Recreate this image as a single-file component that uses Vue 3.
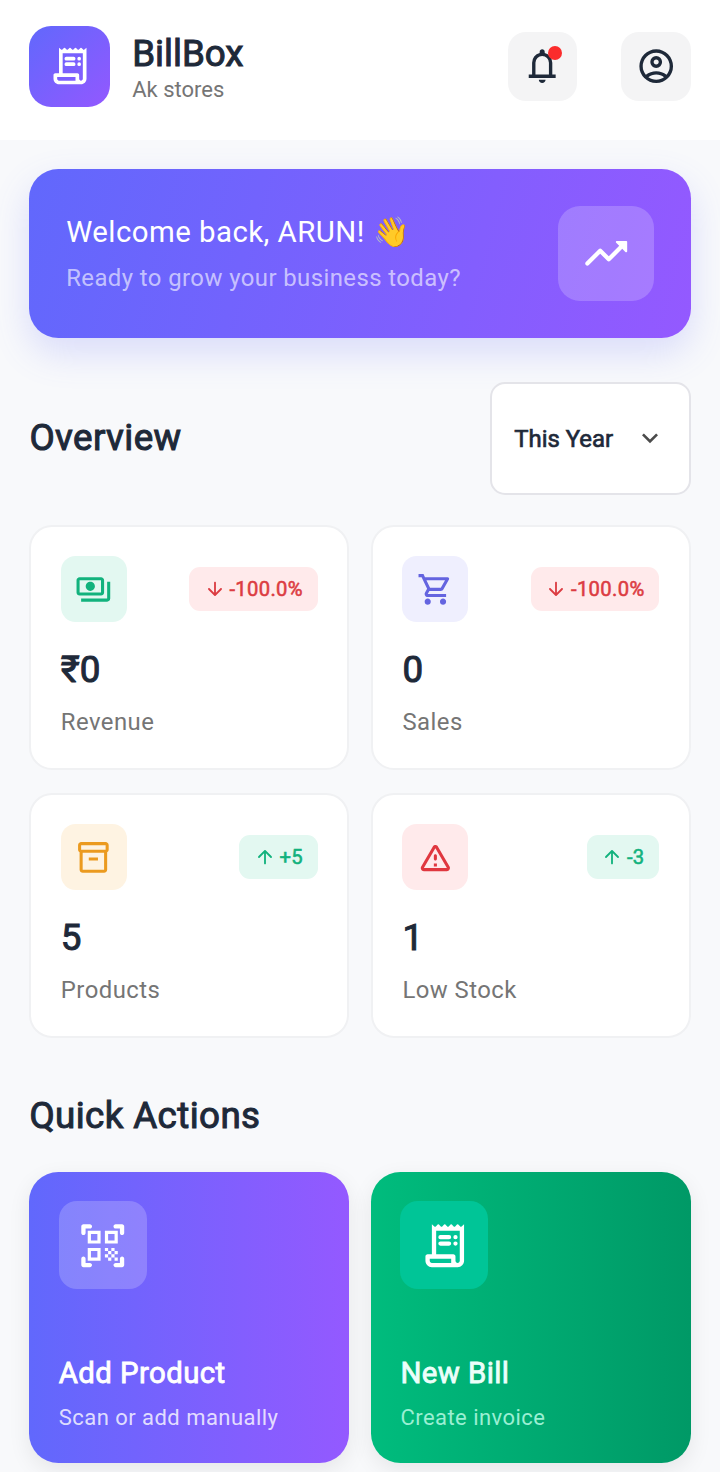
<script setup>
import {ref} from "vue";

const storeName = ref("Ak stores");
const userName = ref("ARUN");
const period = ref("This Year");

const icons = {
  receipt: "M19.5 3.3L18.3 2.15Q18 1.85 17.7 2.15L16.85 3Q16.5 3.35 16.15 3L15.3 2.15Q15 1.85 14.7 2.15L13.85 3Q13.5 3.35 13.15 3L12.3 2.15Q12 1.85 11.7 2.15L10.85 3Q10.5 3.35 10.15 3L9.3 2.15Q9 1.85 8.7 2.15L7.85 3Q7.5 3.35 7.15 3L6 2v14H4c-.55 0-1 .45-1 1v2c0 1.66 1.34 3 3 3h12c1.66 0 3-1.34 3-3V2l-1.15 1Q19.7 3.2 19.5 3.3zM15 20H6c-.55 0-1-.45-1-1v-1h10v2zm4-1c0 .55-.45 1-1 1s-1-.45-1-1v-2c0-.55-.45-1-1-1H8V5h11v14z M10 7h4a1 1 0 0 1 0 2h-4a1 1 0 0 1 0-2z M17 7a1 1 0 1 1 0 2a1 1 0 0 1 0-2z M10 10h4a1 1 0 0 1 0 2h-4a1 1 0 0 1 0-2z M17 10a1 1 0 1 1 0 2a1 1 0 0 1 0-2z",
  bell: "M4 19v-2h2v-7q0-2.075 1.25-3.687T10.5 4.2v-.7q0-.625.438-1.062T12 2t1.063.438T13.5 3.5v.7q2 .5 3.25 2.113T18 10v7h2v2zm8 3q-.825 0-1.412-.587T10 20h4q0 .825-.587 1.413T12 22M8 17h8v-7q0-1.65-1.175-2.825T12 6T9.175 7.175T8 10z",
  account: "M5.85 17.1q1.275-.975 2.85-1.537T12 15t3.3.563t2.85 1.537q.875-1.025 1.363-2.325T20 12q0-3.325-2.337-5.663T12 4T6.337 6.338T4 12q0 1.475.488 2.775T5.85 17.1m6.15-4.1q-1.475 0-2.488-1.012T8.5 9.5t1.013-2.488T12 6t2.488 1.013T15.5 9.5t-1.012 2.488T12 13m0 9q-2.075 0-3.9-.788t-3.175-2.137T2.788 15.9T2 12t.788-3.9t2.137-3.175T8.1 2.788T12 2t3.9.788t3.175 2.137T21.213 8.1T22 12t-.788 3.9t-2.137 3.175t-3.175 2.138T12 22m0-2q1.325 0 2.5-.387t2.15-1.113q-.975-.725-2.15-1.112T12 17t-2.5.388T7.35 18.5q.975.725 2.15 1.113T12 20m0-9q.65 0 1.075-.425T13.5 9.5t-.425-1.075T12 8t-1.075.425T10.5 9.5t.425 1.075T12 11",
  trending: "M16.85 6.85l1.44 1.44-4.88 4.88-3.29-3.29c-.39-.39-1.02-.39-1.41 0l-6 6.01c-.39.39-.39 1.02 0 1.41.39.39 1.02.39 1.41 0L9.41 12l3.29 3.29c.39.39 1.02.39 1.41 0l5.59-5.58 1.44 1.44c.31.31.85.09.85-.35V6.5c.01-.28-.21-.5-.49-.5h-4.29c-.45 0-.67.54-.36.85z",
  chevron: "M7.41 8.59L12 13.17l4.59-4.58L18 10l-6 6-6-6z",
  payments: "M19 14V6c0-1.1-.9-2-2-2H3c-1.1 0-2 .9-2 2v8c0 1.1.9 2 2 2h14c1.1 0 2-.9 2-2zm-2 0H3V6h14v8zm-7-7c-1.66 0-3 1.34-3 3s1.34 3 3 3 3-1.34 3-3-1.34-3-3-3zm13 0v11c0 1.1-.9 2-2 2H4v-2h17V7h2z",
  cart: "M15.55 13c.75 0 1.41-.41 1.75-1.03l3.58-6.49c.37-.66-.11-1.48-.87-1.48H5.21l-.94-2H1v2h2l3.6 7.59-1.35 2.44C4.52 15.37 5.48 17 7 17h12v-2H7l1.1-2h7.45zM6.16 6h12.15l-2.76 5H8.53L6.16 6zM7 18c-1.1 0-1.99.9-1.99 2S5.9 22 7 22s2-.9 2-2-.9-2-2-2zm10 0c-1.1 0-1.99.9-1.99 2s.89 2 1.99 2 2-.9 2-2-.9-2-2-2z",
  box: "M20 2H4c-1 0-2 .9-2 2v3.01c0 .72.43 1.34 1 1.69V20c0 1.1 1.1 2 2 2h14c.9 0 2-.9 2-2V8.7c.57-.35 1-.97 1-1.69V4c0-1.1-1-2-2-2zm-1 18H5V9h14v11zm1-13H4V4h16v3z M9 12h6v2H9z",
  warning: "M12 5.99L19.53 19H4.47L12 5.99M2.74 18c-.77 1.33.19 3 1.73 3h15.06c1.54 0 2.5-1.67 1.73-3L13.73 4.99c-.77-1.33-2.69-1.33-3.46 0L2.74 18zM11 11v2c0 .55.45 1 1 1s1-.45 1-1v-2c0-.55-.45-1-1-1s-1 .45-1 1zm0 5h2v2h-2z",
  down: "M11 5v11.17l-4.88-4.88c-.39-.39-1.03-.39-1.42 0-.39.39-.39 1.02 0 1.41l6.59 6.59c.39.39 1.02.39 1.41 0l6.59-6.59c.39-.39.39-1.02 0-1.41-.39-.39-1.02-.39-1.41 0L13 16.17V5c0-.55-.45-1-1-1s-1 .45-1 1z",
  up: "M13 19V7.83l4.88 4.88c.39.39 1.03.39 1.42 0 .39-.39.39-1.02 0-1.41l-6.59-6.59c-.39-.39-1.02-.39-1.41 0l-6.6 6.58c-.39.39-.39 1.02 0 1.41.39.39 1.02.39 1.41 0L11 7.83V19c0 .55.45 1 1 1s1-.45 1-1z",
  qr: "M9.5 6.5v3h-3v-3h3M11 5H5v6h6V5zm-1.5 9.5v3h-3v-3h3M11 13H5v6h6v-6zm6.5-6.5v3h-3v-3h3M19 5h-6v6h6V5zm-6 8h1.5v1.5H13V13zm1.5 1.5H16V16h-1.5v-1.5zM16 13h1.5v1.5H16V13zm-3 3h1.5v1.5H13V16zm1.5 1.5H16V19h-1.5v-1.5zM16 16h1.5v1.5H16V16zm1.5-1.5H19V16h-1.5v-1.5zm0 3H19V19h-1.5v-1.5z M21 7c-.55 0-1-.45-1-1V4h-2c-.55 0-1-.45-1-1s.45-1 1-1h3c.55 0 1 .45 1 1v3c0 .55-.45 1-1 1z M22 21v-3c0-.55-.45-1-1-1s-1 .45-1 1v2h-2c-.55 0-1 .45-1 1s.45 1 1 1h3c.55 0 1-.45 1-1z M3 22h3c.55 0 1-.45 1-1s-.45-1-1-1H4v-2c0-.55-.45-1-1-1s-1 .45-1 1v3c0 .55.45 1 1 1z M2 3v3c0 .55.45 1 1 1s1-.45 1-1V4h2c.55 0 1-.45 1-1s-.45-1-1-1H3c-.55 0-1 .45-1 1z"
};

const stats = ref([
  {label: "Revenue", value: "₹0", icon: "payments", color: "green", change: "-100.0%", trend: "down"},
  {label: "Sales", value: "0", icon: "cart", color: "indigo", change: "-100.0%", trend: "down"},
  {label: "Products", value: "5", icon: "box", color: "amber", change: "+5", trend: "up"},
  {label: "Low Stock", value: "1", icon: "warning", color: "red", change: "-3", trend: "up"}
]);

const actions = [
  {title: "Add Product", text: "Scan or add manually", icon: "qr", theme: "purple"},
  {title: "New Bill", text: "Create invoice", icon: "receipt", theme: "emerald"}
];
</script>

<template>
  <div class="page">
    <header class="header">
      <div class="logo">
        <svg viewBox="0 0 24 24"><path :d="icons.receipt"/></svg>
      </div>
      <div class="brand">
        <h1 class="strong">BillBox</h1>
        <p>{{ storeName }}</p>
      </div>
      <button class="icon-button">
        <svg viewBox="0 0 24 24"><path :d="icons.bell"/></svg>
        <span class="dot"></span>
      </button>
      <button class="icon-button">
        <svg viewBox="0 0 24 24"><path :d="icons.account"/></svg>
      </button>
    </header>

    <main class="content">
      <section class="banner">
        <div>
          <p class="banner-title">Welcome back, {{ userName }}! <span class="wave">👋</span></p>
          <p class="banner-text">Ready to grow your business today?</p>
        </div>
        <div class="banner-icon">
          <svg viewBox="0 0 24 24"><path :d="icons.trending"/></svg>
        </div>
      </section>

      <div class="overview-head">
        <h2 class="strong">Overview</h2>
        <button class="period">
          <span class="strong">{{ period }}</span>
          <svg viewBox="0 0 24 24"><path :d="icons.chevron"/></svg>
        </button>
      </div>

      <section class="stats">
        <div class="stat" v-for="stat in stats" :key="stat.label">
          <div class="stat-top">
            <div class="stat-icon" :class="stat.color">
              <svg viewBox="0 0 24 24"><path :d="icons[stat.icon]"/></svg>
            </div>
            <div class="badge" :class="stat.trend">
              <svg viewBox="0 0 24 24"><path :d="icons[stat.trend]"/></svg>
              <span class="strong">{{ stat.change }}</span>
            </div>
          </div>
          <p class="stat-value strong">{{ stat.value }}</p>
          <p class="stat-label">{{ stat.label }}</p>
        </div>
      </section>

      <h2 class="actions-title strong">Quick Actions</h2>
      <section class="actions">
        <div class="action" :class="action.theme" v-for="action in actions" :key="action.title">
          <div class="action-icon">
            <svg viewBox="0 0 24 24"><path :d="icons[action.icon]"/></svg>
          </div>
          <p class="action-title strong">{{ action.title }}</p>
          <p class="action-text">{{ action.text }}</p>
        </div>
      </section>
    </main>
  </div>
</template>

<style>
body {
  margin: 0;
  background: #f8f9fb;
}
</style>

<style scoped>
.page {
  height: 1472px;
  overflow: hidden;
  background: #f8f9fb;
  color: #1e2939;
  font-family: Roboto, "Noto Color Emoji", sans-serif;
}

h1, h2, p {
  margin: 0;
}

/* regular glyphs with a thin outline, narrower than the real bold */
.strong {
  font-weight: 400;
  -webkit-text-stroke: 0.028em currentColor;
}

svg {
  display: block;
  fill: currentColor;
  flex: none;
}

button {
  border: 0;
  font: inherit;
  color: inherit;
}

.header {
  position: relative;
  z-index: 1;
  display: flex;
  align-items: center;
  height: 140px;
  box-sizing: border-box;
  padding: 0 29.4px 7px;
  background: #fff;
}

.logo {
  display: flex;
  align-items: center;
  justify-content: center;
  width: 80.8px;
  height: 80.8px;
  border-radius: 22px;
  color: #fff;
  background: linear-gradient(135deg, #6168fc, #9358ff);
}

.logo svg {
  width: 44px;
  height: 44px;
}

.brand {
  flex: 1;
  padding: 5px 0 0 22px;
}

.brand h1 {
  font-size: 36.75px;
  line-height: 40px;
}

.brand p {
  margin-top: 2.6px;
  font-size: 22px;
  line-height: 28px;
  color: #757575;
}

.icon-button {
  position: relative;
  display: flex;
  align-items: center;
  justify-content: center;
  width: 69.5px;
  height: 69.5px;
  padding: 0;
  border-radius: 18px;
  background: #f4f4f5;
}

.icon-button + .icon-button {
  margin-left: 44px;
}

.icon-button svg {
  width: 40.4px;
  height: 40.4px;
}

.dot {
  position: absolute;
  top: 14px;
  right: 15px;
  width: 14.6px;
  height: 14.6px;
  border-radius: 50%;
  background: #fb2c2c;
}

.content {
  padding: 29px 29.4px 0;
}

.banner {
  display: flex;
  align-items: center;
  justify-content: space-between;
  height: 168.7px;
  box-sizing: border-box;
  padding: 0 36.75px;
  border-radius: 29.4px;
  color: #fff;
  background: linear-gradient(104.3deg, #6168fc, #9459ff);
  box-shadow: 0 15px 37px rgba(97, 104, 252, 0.2);
}

.banner-title {
  padding-top: 2px;
  font-size: 29.4px;
  line-height: 36px;
  letter-spacing: 0.46px;
}

.wave {
  margin-left: 1px;
}

.banner-text {
  margin-top: 12px;
  font-size: 23.9px;
  line-height: 32px;
  letter-spacing: 0.43px;
  color: rgba(255, 255, 255, 0.62);
}

.banner-icon {
  display: flex;
  align-items: center;
  justify-content: center;
  width: 95.5px;
  height: 95.5px;
  border-radius: 22px;
  background: rgba(255, 255, 255, 0.2);
}

.banner-icon svg {
  width: 51.5px;
  height: 51.5px;
}

.overview-head {
  display: flex;
  align-items: center;
  justify-content: space-between;
  margin-top: 44.3px;
}

h2 {
  font-size: 36.75px;
  line-height: 44px;
  letter-spacing: 0.4px;
}

.period {
  display: flex;
  align-items: center;
  justify-content: space-between;
  width: 200.4px;
  height: 113px;
  box-sizing: border-box;
  padding: 0 22.5px 0 22px;
  border: 2px solid #e4e4e9;
  border-radius: 15px;
  background: #fff;
  font-size: 23.9px;
}

.period span {
  padding-top: 2px;
}

.period svg {
  width: 32px;
  height: 32px;
  color: #4b4b4b;
}

.stats {
  display: grid;
  grid-template-columns: 1fr 1fr;
  gap: 22.5px 22px;
  margin-top: 29.6px;
}

.stat {
  height: 245.5px;
  box-sizing: border-box;
  padding: 29.4px;
  border: 2px solid #f0f1f3;
  border-radius: 23px;
  background: #fff;
}

.stat-top {
  display: flex;
  align-items: center;
  justify-content: space-between;
}

.stat-icon {
  display: flex;
  align-items: center;
  justify-content: center;
  width: 66px;
  height: 66px;
  border-radius: 14.7px;
}

.stat-icon svg {
  width: 36.75px;
  height: 36.75px;
}

.green {
  color: #12b27d;
  background: #e3f8f1;
}

.indigo {
  color: #6464e0;
  background: #efeffe;
}

.amber {
  color: #eb9a1f;
  background: #fef3e2;
}

.red {
  color: #e0373f;
  background: #ffeaeb;
}

.badge {
  display: flex;
  align-items: center;
  gap: 3.7px;
  height: 44px;
  padding: 0 14.7px;
  border-radius: 11px;
  font-size: 20.2px;
  letter-spacing: 0.35px;
}

.badge span {
  padding-top: 1px;
}

.badge svg {
  width: 22px;
  height: 22px;
}

.badge.down {
  color: #dc3c42;
  background: #ffeaeb;
}

.badge.up {
  color: #12b27d;
  background: #e3f8f1;
}

.stat-value {
  margin-top: 26.5px;
  font-size: 36.75px;
  line-height: 44px;
}

.stat-label {
  margin-top: 16px;
  font-size: 23.9px;
  line-height: 28px;
  letter-spacing: 0.46px;
  color: #757575;
}

.actions-title {
  margin-top: 56px;
}

.actions {
  display: grid;
  grid-template-columns: 1fr 1fr;
  gap: 22px;
  margin-top: 34px;
}

.action {
  display: flex;
  flex-direction: column;
  height: 290.5px;
  box-sizing: border-box;
  padding: 29.4px 29.4px 30.4px;
  border-radius: 29.4px;
  color: #fff;
  box-shadow: 0 7px 22px rgba(0, 0, 0, 0.08);
}

.purple {
  background: linear-gradient(90deg, #6168fc, #9459ff);
}

.emerald {
  background: linear-gradient(90deg, #00bc7d, #009966);
}

.action-icon {
  display: flex;
  align-items: center;
  justify-content: center;
  width: 88px;
  height: 88px;
  border-radius: 18px;
  background: rgba(255, 255, 255, 0.2);
}

.emerald .action-icon {
  background: #00c597;
}

.action-icon svg {
  width: 51.5px;
  height: 51.5px;
}

.action-title {
  margin-top: auto;
  font-size: 29.4px;
  line-height: 36px;
  letter-spacing: 0.4px;
}

.action-text {
  margin-top: 13px;
  font-size: 22px;
  line-height: 28px;
  letter-spacing: 0.46px;
  color: rgba(255, 255, 255, 0.8);
}

.emerald .action-title {
  color: #ecfffa;
}

.emerald .action-text {
  color: #9aefd3;
}
</style>
